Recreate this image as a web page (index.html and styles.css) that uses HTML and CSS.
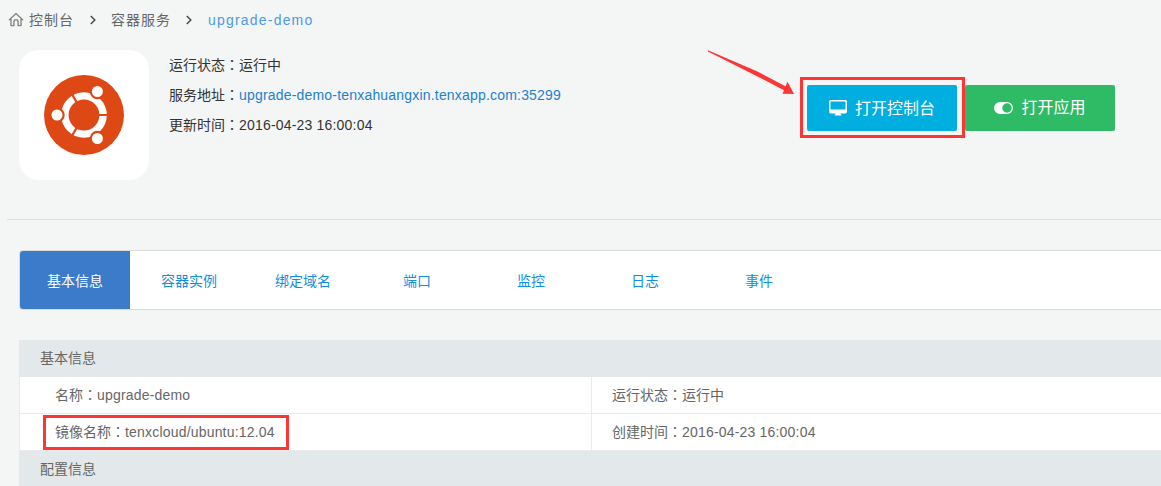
FILE: index.html
```html
<!DOCTYPE html>
<html lang="zh-CN">
<head>
<meta charset="utf-8">
<title>upgrade-demo</title>
<link rel="stylesheet" href="styles.css">
</head>
<body>
<nav class="breadcrumb">
  <svg class="home" width="16" height="16" viewBox="0 0 16 16"><path d="M1.4 7.8 8 1.6l6.6 6.2M3 7v6.6h2.9V9.9a2.1 2.1 0 0 1 4.2 0v3.7H13V7" fill="none" stroke="#858585" stroke-width="1.4" stroke-linejoin="round" stroke-linecap="round"/></svg>
  <span class="crumb">控制台</span>
  <svg class="chevron" width="6" height="10" viewBox="0 0 6 10"><path d="M.8 1 4.8 5l-4 4" fill="none" stroke="#484848" stroke-width="1.5"/></svg>
  <span class="crumb">容器服务</span>
  <svg class="chevron" width="6" height="10" viewBox="0 0 6 10"><path d="M.8 1 4.8 5l-4 4" fill="none" stroke="#484848" stroke-width="1.5"/></svg>
  <span class="crumb current">upgrade-demo</span>
</nav>
<header class="summary">
  <div class="logo">
    <svg width="80" height="80" viewBox="0 0 80 80">
      <circle cx="40" cy="40" r="40" fill="#dd4814"/>
      <circle cx="40" cy="40" r="19.1" fill="none" stroke="#fff" stroke-width="7.4"/>
      <g stroke="#dd4814" stroke-width="2.2"><path d="M54 40h10M33 27.9l-5-8.7M33 52.1l-5 8.7"/></g>
      <g fill="#fff" stroke="#dd4814" stroke-width="2.2"><circle cx="13" cy="40" r="6.6"/><circle cx="53.4" cy="16.5" r="6.6"/><circle cx="53.4" cy="63.5" r="6.6"/></g>
    </svg>
  </div>
  <div class="facts">
    <p>运行状态<span class="colon" lang="zh-TW">：</span>运行中</p>
    <p>服务地址<span class="colon" lang="zh-TW">：</span><a class="latin address">upgrade-demo-tenxahuangxin.tenxapp.com:35299</a></p>
    <p>更新时间<span class="colon" lang="zh-TW">：</span><span class="latin">2016-04-23 16:00:04</span></p>
  </div>
  <div class="actions">
    <a class="button console">
      <svg width="18" height="16" viewBox="0 0 18 16"><path fill="#fff" fill-rule="evenodd" d="M1.6 0h14.8Q18 0 18 1.6v10.2q0 1.6-1.6 1.6H11.4l.4 1h.5v1.2H5.7v-1.2h.5l.4-1H1.6Q0 13.400 0 11.800V1.600Q0 0 1.600 0zM1.500 1.500v8.100h15V1.500z"/></svg>
      <span>打开控制台</span>
    </a>
    <a class="button app">
      <svg width="19" height="12" viewBox="0 0 19 12"><path fill="#fff" fill-rule="evenodd" d="M6 0h7a6 6 0 0 1 0 12H6A6 6 0 0 1 6 0zm7 1.300a4.700 4.700 0 1 0 0 9.400 4.700 4.700 0 0 0 0-9.400z"/></svg>
      <span>打开应用</span>
    </a>
  </div>
</header>
<main class="content">
  <nav class="tabs">
    <a class="tab active">基本信息</a>
    <a class="tab">容器实例</a>
    <a class="tab">绑定域名</a>
    <a class="tab">端口</a>
    <a class="tab">监控</a>
    <a class="tab">日志</a>
    <a class="tab">事件</a>
  </nav>
  <section class="details">
    <h2 class="section-title">基本信息</h2>
    <div class="row">
      <div class="cell">名称<span class="colon" lang="zh-TW">：</span><span class="latin">upgrade-demo</span></div>
      <div class="cell">运行状态<span class="colon" lang="zh-TW">：</span>运行中</div>
    </div>
    <div class="row">
      <div class="cell">镜像名称<span class="colon" lang="zh-TW">：</span><span class="latin">tenxcloud/ubuntu:12.04</span></div>
      <div class="cell">创建时间<span class="colon" lang="zh-TW">：</span><span class="latin">2016-04-23 16:00:04</span></div>
    </div>
    <h2 class="section-title">配置信息</h2>
  </section>
</main>
<div class="highlight highlight-console"></div>
<div class="highlight highlight-image"></div>
<svg class="arrow" width="90" height="48" viewBox="0 0 90 48"><path fill="#fd3535" d="M2 .2 52 21.800 79.500 36.200l2-4.400L88 43.900l-11.500-.2 1.500-3.500L49 25.200 2 1.400z"/></svg>
</body>
</html>
```

FILE: styles.css
```css
* { box-sizing: border-box; }
body {
  margin: 0;
  width: 1161px;
  height: 486px;
  overflow: hidden;
  position: relative;
  background: #f4f6f6;
  color: #333;
  font: 400 14px/20px "Liberation Sans", "Noto Sans CJK SC", sans-serif;
}
.colon { font-family: "Noto Sans CJK TC", sans-serif; line-height: 1; }
.latin { letter-spacing: .19px; }
.breadcrumb {
  display: flex;
  align-items: center;
  height: 40px;
  padding-left: 8px;
  color: #666;
  letter-spacing: 1px;
}
.home { margin-right: 5px; }
.chevron { margin: 0 15px 0 16px; }
.chevron + .crumb { margin-right: -1px; }
.crumb.current { margin-left: 1px; color: #4f98e3; letter-spacing: 1.2px; }
.summary {
  display: flex;
  height: 180px;
  margin-left: 7px;
  padding: 10px 46px 0 12px;
  border-bottom: 1px solid #dadddd;
}
.logo {
  display: flex;
  align-items: center;
  justify-content: center;
  width: 130px;
  height: 130px;
  border-radius: 20px;
  background: #fff;
}
.facts { margin-left: 20px; }
.facts p { margin: 0; line-height: 30px; }
.address { color: #1e80cf; }
.actions {
  display: flex;
  gap: 8px;
  margin: 35px 0 0 auto;
}
.button {
  display: flex;
  align-items: center;
  justify-content: center;
  gap: 8px;
  width: 150px;
  height: 46px;
  border-radius: 2px;
  color: #fff;
  font-size: 16px;
}
.console { background: #00aee0; }
.console span { padding-top: 2px; }
.app { background: #2fba66; }
.content { padding: 30px 0 0 19px; }
.tabs {
  display: flex;
  gap: 4px;
  height: 60px;
  border: 1px solid #d9dcdc;
  border-right: 0;
  border-radius: 4px 0 0 4px;
  background: #fff;
}
.tab {
  width: 110px;
  line-height: 60px;
  text-align: center;
  color: #118fdb;
}
.tab.active {
  border-radius: 3px 0 0 3px;
  background: #3c7bc9;
  color: #fff;
}
.details { margin-top: 30px; color: #666; }
.section-title {
  height: 37px;
  margin: 0;
  padding-left: 21px;
  background: #e3e8ea;
  font-size: 14px;
  font-weight: 400;
  line-height: 36px;
}
.row {
  display: grid;
  grid-template-columns: 571px 1fr;
  height: 37px;
  border-left: 1px solid #e9ebeb;
  border-bottom: 1px solid #ebebeb;
  background: #fff;
}
.cell { padding-left: 35px; line-height: 36px; }
.cell + .cell { padding-left: 20px; border-left: 1px solid #ebebeb; }
.highlight { position: absolute; border: 3px solid #fd3535; }
.highlight-console { left: 800px; top: 77px; width: 165px; height: 61px; }
.highlight-image { left: 43px; top: 415px; width: 246px; height: 35px; }
.arrow { position: absolute; left: 706px; top: 50px; }
```
